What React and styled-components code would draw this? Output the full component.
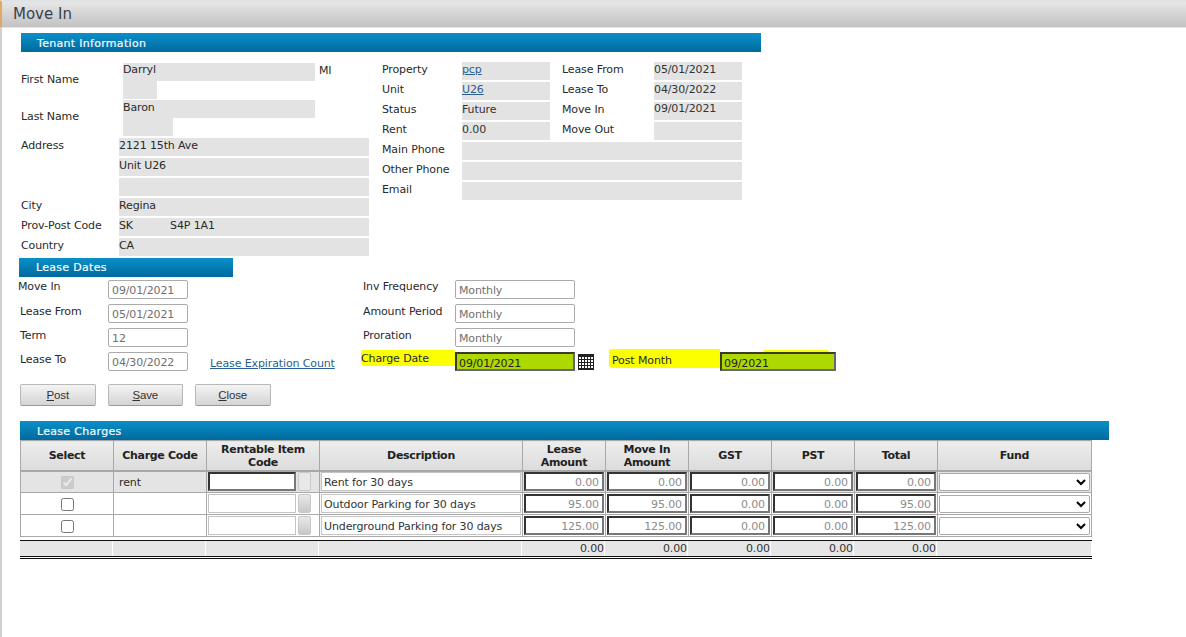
import React from "react";
import styled, { createGlobalStyle } from "styled-components";

const Global = createGlobalStyle`
  html, body { margin: 0; padding: 0; background: #fff; }
  body { font-family: "DejaVu Sans", Verdana, sans-serif; font-size: 11px; letter-spacing: -0.12px; color: #2a2a2a; }
  * { box-sizing: border-box; }
  input, select, button { letter-spacing: -0.12px; }
`;

const Page = styled.div`
  width: 1186px;
  height: 637px;
  overflow: hidden;
  display: flex;
  flex-direction: column;
`;
const TitleBar = styled.header`
  height: 28px;
  flex: none;
  padding: 3px 0 0 11px;
  border-left: 2px solid #e0a860;
  border-top: 2px solid #dfe3e8;
  border-bottom: 1px solid #e4e4e4;
  background: linear-gradient(#e6e6e6, #c2c2c2);
  font-size: 15px;
  line-height: 18px;
  letter-spacing: 0;
  color: #37414d;
`;
const Content = styled.main`
  flex: 1;
  border-left: 2px solid #cfcfcf;
  padding-top: 5px;
`;
const SectionBar = styled.h2`
  margin: 0 0 0 ${(p) => p.$left}px;
  width: ${(p) => p.$width}px;
  height: 19px;
  padding-left: ${(p) => p.$pad}px;
  background: linear-gradient(#0a8fc8, #006a9e);
  color: #f2fbff;
  font-size: 11px;
  font-weight: 400;
  line-height: ${(p) => p.$line}px;
  letter-spacing: 0.3px;
  -webkit-text-stroke: 0.2px #f2fbff;
`;
const TenantGrid = styled.section`
  display: flex;
  margin: 11px 0 0 19px;
  height: 195px;
`;
const NameColumn = styled.div`
  width: 361px;
  display: flex;
  flex-direction: column;
`;
const NameRow = styled.div`
  display: grid;
  grid-template-columns: 102px 192px 1fr;
  height: 37px;
  align-items: start;
`;
const NameLabel = styled.div`
  line-height: 34px;
`;
const NameStack = styled.div`
  display: flex;
  flex-direction: column;
  align-items: flex-start;
`;
const NameBox = styled.div`
  height: 18px;
  width: ${(p) => p.$width}px;
  background: #e3e3e3;
  line-height: ${(p) => p.$line || 14}px;
`;
const MiddleName = styled.span`
  padding-left: 4px;
  line-height: 16px;
`;
const AddressRows = styled.div`
  display: grid;
  grid-template-columns: 98px 250px;
  grid-auto-rows: 18px;
  row-gap: 2px;
  margin-top: 1px;
`;
const FieldLabel = styled.div`
  line-height: 15px;
`;
const FieldValue = styled.div`
  background: #e3e3e3;
  height: 18px;
  line-height: 15px;
  white-space: pre;
`;
const SummaryGrid = styled.div`
  margin: -1px 0 0 0;
  display: grid;
  grid-template-columns: 80px 88px 12px 92px 88px;
  grid-auto-rows: 18px;
  row-gap: 2px;
  align-content: start;
  width: 360px;
`;
const SummaryLabel = styled.div`
  line-height: 15px;
  grid-column: ${(p) => p.$column || "auto"};
`;
const SummaryValue = styled.div`
  background: #e3e3e3;
  line-height: ${(p) => (p.$tight ? 13 : 15)}px;
  color: #333;
  grid-column: ${(p) => p.$column || "auto"};
  a { color: #2a5f8f; text-decoration: underline; }
`;
const DatesGrid = styled.section`
  display: grid;
  grid-template-columns: 90px 80px 22px 153px 92px 120px 34px 111px 116px;
  grid-template-rows: repeat(4, 19px);
  row-gap: 5px;
  margin: 3px 0 0 16px;
  align-items: start;
`;
const DateLabel = styled.div`
  grid-row: ${(p) => p.$row};
  grid-column: ${(p) => p.$col};
  padding: ${(p) => (p.$row > 1 ? 1 : 0)}px 0 0 ${(p) => p.$indent || 0}px;
  line-height: 13px;
`;
const ReadInput = styled.input`
  grid-row: ${(p) => p.$row};
  grid-column: ${(p) => p.$col};
  width: 100%;
  height: 19px;
  padding: 2px 3px 0;
  border: 1px solid #aaa;
  border-radius: 2px;
  background: #fff;
  font: 11px "DejaVu Sans", Verdana, sans-serif;
  color: #707070;
  outline: none;
`;
const ExpiryLink = styled.a`
  grid-column: 4;
  grid-row: 4;
  padding-top: 5px;
  color: #2a5f8f;
  text-decoration: underline;
  white-space: nowrap;
  line-height: 13px;
`;
const Highlight = styled.div`
  position: relative;
  grid-column: ${(p) => p.$column};
  grid-row: 4;
  height: ${(p) => p.$height}px;
  margin: ${(p) => p.$top}px 0 0 ${(p) => p.$left}px;
  padding: ${(p) => p.$pad}px 0 0 ${(p) => p.$inset}px;
  background: #fcff00;
  border-radius: 2px 1px 0 4px;
  line-height: 13px;
  ${(p) => p.$tail && `
    &::after {
      content: "";
      position: absolute;
      left: 154px;
      top: 1px;
      width: 66px;
      height: 3px;
      border-radius: 2px;
      background: #fcff00;
    }
  `}
`;
const LimeInput = styled.input`
  position: relative;
  z-index: 1;
  grid-row: 4;
  grid-column: ${(p) => p.$column};
  width: 100%;
  height: 19px;
  padding: 3px 2px 0;
  border: 2px solid #3b3b2a;
  border-right-color: #667;
  border-bottom-color: #667;
  background: #add800;
  font: 11px "DejaVu Sans", Verdana, sans-serif;
  color: #222;
  outline: none;
`;
const CalendarButton = styled.svg`
  grid-row: 4;
  grid-column: 7;
  margin: 2px 0 0 3px;
`;
const ButtonRow = styled.div`
  display: flex;
  gap: 12px;
  margin: 13px 0 0 18px;
`;
const ActionButton = styled.button`
  width: 75.5px;
  height: 22px;
  padding: 0;
  border: 1px solid #b8b8b8;
  border-bottom-color: #999;
  border-radius: 2px;
  background: linear-gradient(#f4f4f4, #d4d4d4);
  font: 11.5px "Liberation Sans", Arial, sans-serif;
  color: #333;
  u { text-decoration: underline; }
`;
const ChargesWrap = styled.section`
  margin: 15px 0 0 18px;
`;
const ChargesTable = styled.table`
  width: 1071px;
  table-layout: fixed;
  border-collapse: collapse;
`;
const HeadCell = styled.th`
  height: 30px;
  padding: 1px 0 0;
  border: 1px solid #a8a8a8;
  border-bottom-width: 2px;
  background: linear-gradient(#ededed, #dcdcdc);
  font-size: 11px;
  line-height: 13px;
  font-weight: 700;
  letter-spacing: -0.3px;
  color: #222;
`;
const Row = styled.tr`
  background: ${(p) => (p.$shaded ? "#e4e4e4" : "#fff")};
`;
const Cell = styled.td`
  height: 22px;
  padding: 0 1px;
  border: 1px solid #a8a8a8;
  text-align: ${(p) => (p.$center ? "center" : "left")};
  line-height: 14px;
  vertical-align: middle;
`;
const CodeCell = styled(Cell)`
  padding: 2px 0 0 5px;
`;
const Check = styled.input`
  margin: 1px 0 0;
  width: 13px;
  height: 13px;
  vertical-align: top;
`;
const LookupWrap = styled.div`
  display: flex;
  gap: 2px;
  align-items: center;
`;
const CodeInput = styled.input`
  width: 88px;
  height: 19px;
  padding: 0 3px;
  outline: none;
  background: #fff;
  border: ${(p) => (p.$strong ? "2px solid #333" : "1px solid #c4c4c4")};
  ${(p) => p.$strong && "border-right-color: #777; border-bottom-color: #777;"}
`;
const LookupButton = styled.div`
  width: 13px;
  height: 19px;
  border: 1px solid #c8c8c8;
  border-radius: 2px;
  background: ${(p) => (p.$faint ? "#e8e8e8" : "linear-gradient(#e8e8e8, #c8c8c8)")};
`;
const DescInput = styled.input`
  width: 100%;
  height: 19px;
  padding: 2px 2px 0;
  border: 1px solid #c4c4c4;
  background: #fff;
  outline: none;
  font: 11px "DejaVu Sans", Verdana, sans-serif;
  color: #333;
`;
const AmountInput = styled.input`
  display: block;
  width: 100%;
  height: 19px;
  padding: 1px 3px 0;
  text-align: right;
  background: #fff;
  outline: none;
  border: 2px solid #333;
  border-right-color: #777;
  border-bottom-color: #777;
  font: 11px "DejaVu Sans", Verdana, sans-serif;
  color: #8c8c8c;
`;
const FundSelect = styled.select`
  display: block;
  width: 100%;
  height: 18px;
  background: #fff;
  border: 1px solid #aaa;
  border-radius: 2px;
  outline: none;
  font: 11px "DejaVu Sans", Verdana, sans-serif;
`;
const Totals = styled.div`
  display: grid;
  grid-template-columns: 93px 93px 113px 203px 83px 83px 83px 83px 83px 155px;
  width: 1072px;
  height: 19px;
  margin-top: 3px;
  border-top: 1px solid #111;
  border-bottom: 3px double #111;
`;
const TotalCell = styled.div`
  background: #e6e6e6;
  border-right: 1px solid #fff;
  text-align: right;
  line-height: 14px;
  padding-top: 1px;
  color: #333;
`;

const nameRows = [
  { label: "First Name", value: "Darryl", small: 34, mi: "MI", line: 14 },
  { label: "Last Name", value: "Baron", small: 50, line: 16 },
];
const addressRows = [
  ["Address", "2121 15th Ave"],
  ["", "Unit U26"],
  ["", ""],
  ["City", "Regina"],
  ["Prov-Post Code", "SK           S4P 1A1"],
  ["Country", "CA"],
];
const leaseLeft = [
  ["Move In", "09/01/2021", 0],
  ["Lease From", "05/01/2021", 2],
  ["Term", "12", 2],
  ["Lease To", "04/30/2022", 2],
];
const leaseRight = [
  ["Inv Frequency", "Monthly"],
  ["Amount Period", "Monthly"],
  ["Proration", "Monthly"],
];
const columns = [93, 93, 113, 203, 83, 83, 83, 83, 83, 154];
const headers = [
  "Select",
  "Charge Code",
  ["Rentable Item", "Code"],
  "Description",
  ["Lease", "Amount"],
  ["Move In", "Amount"],
  "GST",
  "PST",
  "Total",
  "Fund",
];
const charges = [
  { code: "rent", desc: "Rent for 30 days", lease: "0.00", moveIn: "0.00", total: "0.00", locked: true },
  { code: "", desc: "Outdoor Parking for 30 days", lease: "95.00", moveIn: "95.00", total: "95.00" },
  { code: "", desc: "Underground Parking for 30 days", lease: "125.00", moveIn: "125.00", total: "125.00" },
];

export default function App() {
  return (
    <Page>
      <Global />
      <TitleBar>Move In</TitleBar>
      <Content>
        <SectionBar $left={19} $width={740} $pad={16} $line={22}>Tenant Information</SectionBar>
        <TenantGrid>
          <NameColumn>
            {nameRows.map((r) => (
              <NameRow key={r.label}>
                <NameLabel>{r.label}</NameLabel>
                <NameStack>
                  <NameBox $width={192} $line={r.line}>{r.value}</NameBox>
                  <NameBox $width={r.small} />
                </NameStack>
                {r.mi && <MiddleName>{r.mi}</MiddleName>}
              </NameRow>
            ))}
            <AddressRows>
              {addressRows.map(([l, v], i) => (
                <React.Fragment key={i}>
                  <FieldLabel>{l}</FieldLabel>
                  <FieldValue>{v}</FieldValue>
                </React.Fragment>
              ))}
            </AddressRows>
          </NameColumn>
          <SummaryGrid>
            <SummaryLabel>Property</SummaryLabel>
            <SummaryValue><a href="#p">pcp</a></SummaryValue>
            <SummaryLabel $column="4">Lease From</SummaryLabel>
            <SummaryValue>05/01/2021</SummaryValue>
            <SummaryLabel>Unit</SummaryLabel>
            <SummaryValue><a href="#u">U26</a></SummaryValue>
            <SummaryLabel $column="4">Lease To</SummaryLabel>
            <SummaryValue>04/30/2022</SummaryValue>
            <SummaryLabel>Status</SummaryLabel>
            <SummaryValue>Future</SummaryValue>
            <SummaryLabel $column="4">Move In</SummaryLabel>
            <SummaryValue $tight>09/01/2021</SummaryValue>
            <SummaryLabel>Rent</SummaryLabel>
            <SummaryValue>0.00</SummaryValue>
            <SummaryLabel $column="4">Move Out</SummaryLabel>
            <SummaryValue />
            <SummaryLabel>Main Phone</SummaryLabel>
            <SummaryValue $column="2 / 6" />
            <SummaryLabel>Other Phone</SummaryLabel>
            <SummaryValue $column="2 / 6" />
            <SummaryLabel>Email</SummaryLabel>
            <SummaryValue $column="2 / 6" />
          </SummaryGrid>
        </TenantGrid>

        <SectionBar $left={17} $width={214} $pad={17} $line={20}>Lease Dates</SectionBar>
        <DatesGrid>
          {leaseLeft.map(([l, v, indent], i) => (
            <React.Fragment key={l}>
              <DateLabel $row={i + 1} $col={1} $indent={indent}>{l}</DateLabel>
              <ReadInput $row={i + 1} $col={2} readOnly value={v} />
            </React.Fragment>
          ))}
          <ExpiryLink href="#e">Lease Expiration Count</ExpiryLink>
          {leaseRight.map(([l, v], i) => (
            <React.Fragment key={l}>
              <DateLabel $row={i + 1} $col={5}>{l}</DateLabel>
              <ReadInput $row={i + 1} $col={6} readOnly value={v} />
            </React.Fragment>
          ))}
          <Highlight $column="5" $height={16} $top={-2} $left={-2} $pad={2} $inset={0}>Charge Date</Highlight>
          <LimeInput $column="6" readOnly value="09/01/2021" />
          <CalendarButton width="16" height="16" viewBox="0 0 16 16" aria-hidden="true">
            <rect x="0.5" y="0.5" width="15" height="15" fill="#fff" stroke="#222" />
            <rect x="0" y="0" width="16" height="3" fill="#222" />
            <path d="M3.5 3v13M6.5 3v13M9.5 3v13M12.5 3v13M0 5.5h16M0 8.5h16M0 11.5h16M0 14.5h16" stroke="#222" strokeWidth="1" />
          </CalendarButton>
          <Highlight $column="8" $height={19} $top={-3} $left={0} $pad={5} $inset={3} $tail>Post Month</Highlight>
          <LimeInput $column="9" readOnly value="09/2021" />
        </DatesGrid>
        <ButtonRow>
          <ActionButton><u>P</u>ost</ActionButton>
          <ActionButton><u>S</u>ave</ActionButton>
          <ActionButton><u>C</u>lose</ActionButton>
        </ButtonRow>
        <ChargesWrap>
          <SectionBar $left={0} $width={1089} $pad={17} $line={22}>Lease Charges</SectionBar>
          <ChargesTable>
            <colgroup>
              {columns.map((w, i) => <col key={i} width={w} />)}
            </colgroup>
            <thead>
              <tr>
                {headers.map((h, i) => (
                  <HeadCell key={i}>
                    {Array.isArray(h) ? <>{h[0]}<br />{h[1]}</> : h}
                  </HeadCell>
                ))}
              </tr>
            </thead>
            <tbody>
              {charges.map((c, i) => (
                <Row key={i} $shaded={c.locked}>
                  <Cell $center><Check type="checkbox" disabled={c.locked} checked={!!c.locked} readOnly /></Cell>
                  <CodeCell>{c.code}</CodeCell>
                  <Cell>
                    <LookupWrap>
                      <CodeInput $strong={c.locked} readOnly value="" />
                      <LookupButton $faint={c.locked} />
                    </LookupWrap>
                  </Cell>
                  <Cell><DescInput readOnly value={c.desc} /></Cell>
                  {[c.lease, c.moveIn, "0.00", "0.00", c.total].map((v, j) => (
                    <Cell key={j}><AmountInput readOnly value={v} /></Cell>
                  ))}
                  <Cell><FundSelect defaultValue=""><option value="" /></FundSelect></Cell>
                </Row>
              ))}
            </tbody>
          </ChargesTable>
          <Totals>
            <TotalCell /><TotalCell /><TotalCell /><TotalCell />
            <TotalCell>0.00</TotalCell>
            <TotalCell>0.00</TotalCell>
            <TotalCell>0.00</TotalCell>
            <TotalCell>0.00</TotalCell>
            <TotalCell>0.00</TotalCell>
            <TotalCell />
          </Totals>
        </ChargesWrap>
      </Content>
    </Page>
  );
}
